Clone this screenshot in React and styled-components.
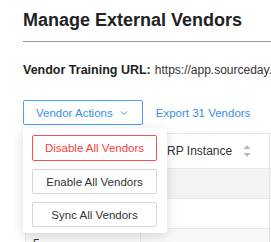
import React from "react";
import styled, { createGlobalStyle } from "styled-components";

const Global = createGlobalStyle`
  html, body { margin: 0; padding: 0; background: #fff; }
  body { font-family: "Liberation Sans", Arial, sans-serif; overflow: hidden; width: 271px; height: 242px; }
`;

const Page = styled.div`
  padding: 8px 0 0 23px;
  overflow: hidden;
`;

const Title = styled.h1`
  margin: 0;
  font-size: 18px;
  line-height: 24px;
  font-weight: 700;
  color: #222;
  white-space: nowrap;
`;

const Rule = styled.hr`
  margin: 9px 0 0;
  border: 0;
  height: 1px;
  background: #9a9a9a;
`;

const InfoLine = styled.div`
  margin-top: 19px;
  line-height: 18px;
  font-size: 12.5px;
  color: #222;
  white-space: nowrap;
  display: flex;
  gap: 4px;
`;

const Label = styled.span`
  font-weight: 700;
`;

const Url = styled.span`
  font-size: 12px;
  color: #333;
`;

const Toolbar = styled.div`
  position: relative;
  margin-top: 21px;
  display: flex;
  align-items: center;
  gap: 13px;
  white-space: nowrap;
`;

const ActionButton = styled.button`
  height: 25px;
  box-sizing: border-box;
  display: flex;
  align-items: center;
  gap: 7px;
  padding: 0 14px 0 12px;
  border: 1px solid #4b9ff0;
  border-radius: 2px;
  background: #fff;
  color: #3a8ee6;
  font-family: "Liberation Sans", Arial, sans-serif;
  font-size: 11.5px;
  cursor: pointer;
`;

const LinkText = styled.a`
  color: #3a8ee6;
  font-size: 11.5px;
  text-decoration: none;
`;

const Menu = styled.div`
  position: absolute;
  top: 28px;
  left: 0;
  width: 144px;
  box-sizing: border-box;
  padding: 7px 10px 6px 9px;
  background: #fff;
  border-radius: 3px;
  box-shadow: 0 3px 12px rgba(0, 0, 0, 0.14);
  display: flex;
  flex-direction: column;
  gap: 8px;
  z-index: 5;
`;

const MenuButton = styled.button`
  height: ${(p) => (p.$danger ? 26 : 25)}px;
  box-sizing: border-box;
  border: 1px solid ${(p) => (p.$danger ? "#f2524e" : "#d6d6d6")};
  border-radius: 2px;
  background: #fff;
  color: ${(p) => (p.$danger ? "#f2413c" : "#333")};
  font-family: "Liberation Sans", Arial, sans-serif;
  font-size: 11.5px;
  padding: 0;
  cursor: pointer;
`;

const Table = styled.div`
  margin: 8px 0 0 2px;
  width: 320px;
  border-left: 1px solid #e6e6e6;
  border-top: 1px solid #e6e6e6;
`;

const Row = styled.div`
  display: grid;
  grid-template-columns: 115px 129px 1fr;
  height: ${(p) => p.$h}px;
  background: ${(p) => p.$bg || "#fff"};
  border-bottom: 1px solid #e9e9e9;
  box-sizing: border-box;
`;

const Cell = styled.div`
  border-right: 1px solid #e6e6e6;
  padding: 0 7px;
  display: flex;
  align-items: center;
  gap: 11px;
  font-size: 12px;
  color: #333;
  white-space: nowrap;
`;

const HeadCell = styled(Cell)`
  padding-left: 18px;
`;

const SortIcon = () => (
  <svg width="8" height="14" viewBox="0 0 8 14">
    <path d="M0.5 5 L4 1.2 L7.5 5 Z" fill="#b4b4b4" />
    <path d="M0.5 9 L7.5 9 L4 12.8 Z" fill="#b4b4b4" />
  </svg>
);

const Chevron = () => (
  <svg width="8" height="6" viewBox="0 0 8 6">
    <path d="M1 1.5 L4 4.5 L7 1.5" fill="none" stroke="#3a8ee6" strokeWidth="1" />
  </svg>
);

export default function App() {
  return (
    <>
      <Global />
      <Page>
        <Title>Manage External Vendors</Title>
        <Rule />
        <InfoLine>
          <Label>Vendor Training URL:</Label>
          <Url>https://app.sourceday.com/vendor-training</Url>
        </InfoLine>
        <Toolbar>
          <ActionButton>
            Vendor Actions <Chevron />
          </ActionButton>
          <LinkText href="#">Export 31 Vendors</LinkText>
          <Menu>
            <MenuButton $danger>Disable All Vendors</MenuButton>
            <MenuButton>Enable All Vendors</MenuButton>
            <MenuButton>Sync All Vendors</MenuButton>
          </Menu>
        </Toolbar>
        <Table>
          <Row $h={35}>
            <HeadCell />
            <HeadCell>
              ERP Instance <SortIcon />
            </HeadCell>
            <HeadCell />
          </Row>
          <Row $h={30} $bg="#f3f3f3">
            <Cell />
            <Cell />
            <Cell />
          </Row>
          <Row $h={30}>
            <Cell />
            <Cell />
            <Cell />
          </Row>
          <Row $h={30} $bg="#f8f8f8">
            <Cell>5</Cell>
            <Cell />
            <Cell />
          </Row>
        </Table>
      </Page>
    </>
  );
}
